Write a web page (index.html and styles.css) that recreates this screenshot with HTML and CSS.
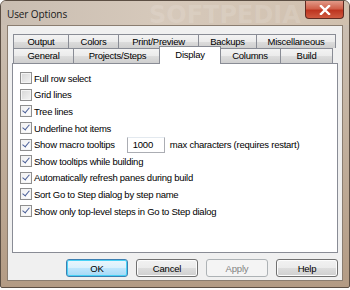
FILE: index.html
```html
<!DOCTYPE html>
<html lang="en">
<head>
    <meta charset="UTF-8">
    <title>User Options</title>
    <link rel="stylesheet" href="styles.css">
</head>
<body>
    <div class="window">
        <div class="titlebar">
            <span class="title">User Options</span>
            <span class="watermark">SOFTPEDIA</span>
            <button class="close">
                <svg width="12" height="10" viewBox="0 0 12 10">
                    <path d="M2 1 L10 9 M10 1 L2 9" stroke="#fff" stroke-width="2.4" stroke-linecap="square"/>
                </svg>
            </button>
        </div>
        <div class="client">
            <div class="tabs">
                <div class="tab-row">
                    <div class="tab t-output">Output</div>
                    <div class="tab t-colors">Colors</div>
                    <div class="tab t-print">Print/Preview</div>
                    <div class="tab t-backups">Backups</div>
                    <div class="tab t-misc">Miscellaneous</div>
                </div>
                <div class="tab-row">
                    <div class="tab t-general">General</div>
                    <div class="tab t-projects">Projects/Steps</div>
                    <div class="tab t-display active">Display</div>
                    <div class="tab t-columns">Columns</div>
                    <div class="tab t-build">Build</div>
                </div>
            </div>
            <div class="panel">
                <label class="option"><span class="check"></span>Full row select</label>
                <label class="option"><span class="check"></span>Grid lines</label>
                <label class="option"><span class="check checked"></span>Tree lines</label>
                <label class="option"><span class="check checked"></span>Underline hot items</label>
                <label class="option">
                    <span class="check checked"></span>Show macro tooltips
                    <span class="field">1000</span>
                    <span class="after">max characters (requires restart)</span>
                </label>
                <label class="option"><span class="check checked"></span>Show tooltips while building</label>
                <label class="option"><span class="check checked"></span>Automatically refresh panes during build</label>
                <label class="option"><span class="check checked"></span>Sort Go to Step dialog by step name</label>
                <label class="option"><span class="check checked"></span>Show only top-level steps in Go to Step dialog</label>
            </div>
            <div class="buttons">
                <button class="btn default">OK</button>
                <button class="btn">Cancel</button>
                <button class="btn" disabled>Apply</button>
                <button class="btn">Help</button>
            </div>
        </div>
    </div>
</body>
</html>
```

FILE: styles.css
```css
body {
    margin: 0;
    padding: 0;
    background-color: #ffffff;
    font-family: "Liberation Sans", Arial, sans-serif;
    font-size: 9.5px;
    letter-spacing: -0.25px;
    color: #000;
}
.window {
    width: 348px;
    height: 286px;
    border: 1px solid #5c4f44;
    border-radius: 6px 6px 2px 2px;
    background: linear-gradient(to bottom, #cdc2b7 0%, #c4b3a1 40%, #b39b84 100%);
    display: flex;
    flex-direction: column;
    position: relative;
    overflow: hidden;
}
.titlebar {
    height: 24px;
    display: flex;
    align-items: flex-start;
    justify-content: space-between;
    background: linear-gradient(to right, #c9bdb1 0%, #d6c9bb 45%, #d0c0ae 100%);
}
.title {
    font-family: "Open Sans", "Liberation Sans", sans-serif;
    font-size: 10px;
    letter-spacing: -0.1px;
    color: #1a1a1a;
    margin: 6px 0 0 6px;
}
.watermark {
    position: absolute;
    left: 148px;
    top: 0;
    font-family: "DejaVu Sans", sans-serif;
    font-weight: bold;
    font-size: 24px;
    letter-spacing: 0;
    color: rgba(255, 255, 255, 0.13);
}
.close {
    width: 39px;
    height: 18px;
    margin: 0 5px 0 0;
    padding: 0;
    border: 1px solid #5e2a22;
    border-top: none;
    border-radius: 0 0 4px 4px;
    background: linear-gradient(to bottom, #e29a88 0%, #d0604a 45%, #bd3520 55%, #cf5a40 100%);
    display: flex;
    align-items: center;
    justify-content: center;
    position: relative;
    z-index: 1;
}
.client {
    margin: 0 6px;
    height: 256px;
    background-color: #f0f0f0;
    border: 1px solid #8a7d70;
    box-sizing: border-box;
    display: flex;
    flex-direction: column;
    padding: 8px 4px 0 4px;
}
.tabs {
    padding-left: 1px;
    display: flex;
    flex-direction: column;
}
.tab-row {
    display: flex;
    height: 14px;
}
.tab-row + .tab-row {
    height: 15px;
}
.tab {
    box-sizing: border-box;
    border: 1px solid #898c95;
    border-bottom: none;
    margin-left: -1px;
    background: linear-gradient(to bottom, #f3f3f3 0%, #ebebeb 50%, #dddddd 51%, #cfcfcf 100%);
    text-align: center;
    line-height: 14px;
    white-space: nowrap;
}
.tab:first-child {
    margin-left: 0;
}
.tab.active {
    background: #fff;
    height: 18px;
    margin: -2px -2px -1px -3px;
    position: relative;
    z-index: 1;
    line-height: 15px;
}
.tab.active + .tab {
    margin-left: 0;
}
.t-output { width: 56px; }
.t-colors { width: 51px; }
.t-print { width: 81px; }
.t-backups { width: 59px; }
.t-misc { width: 80px; }
.t-general { width: 61px; }
.t-projects { width: 89px; }
.t-display { width: 62px; }
.t-columns { width: 62px; }
.t-build { width: 53px; }
.panel {
    height: 190px;
    width: 326px;
    box-sizing: border-box;
    background-color: #fff;
    border: 1px solid #898c95;
    padding: 6px 0 0 7px;
    display: flex;
    flex-direction: column;
}
.option {
    height: 16.6px;
    display: flex;
    align-items: center;
    white-space: nowrap;
}
.check {
    width: 12px;
    height: 12px;
    box-sizing: border-box;
    border: 1px solid #8f8f8f;
    background: linear-gradient(135deg, #d6d6d6 0%, #f4f4f4 100%);
    box-shadow: inset 0 0 0 1px #f4f4f4;
    margin-right: 2px;
    position: relative;
}
.check.checked {
    background: linear-gradient(135deg, #f0f0f0 0%, #ffffff 100%);
}
.check.checked::after {
    content: "";
    position: absolute;
    left: 3px;
    top: 0;
    width: 3px;
    height: 6px;
    border: solid #4a5f98;
    border-width: 0 1.5px 1.5px 0;
    transform: rotate(40deg);
}
.field {
    width: 38px;
    height: 16px;
    box-sizing: border-box;
    border: 1px solid #abadb3;
    border-top-color: #e3e9ef;
    margin-left: 12px;
    padding-left: 5px;
    line-height: 14px;
}
.after {
    margin-left: 5px;
}
.buttons {
    display: flex;
    justify-content: flex-end;
    gap: 8px;
    margin-top: 6px;
    width: 326px;
}
.btn {
    width: 62px;
    height: 18px;
    padding: 0;
    font-family: "Liberation Sans", Arial, sans-serif;
    font-size: 9.5px;
    letter-spacing: -0.2px;
    color: #000;
    border: 1px solid #707070;
    border-radius: 3px;
    background: linear-gradient(to bottom, #f2f2f2 0%, #ebebeb 50%, #dddddd 51%, #cfcfcf 100%);
    box-shadow: inset 0 0 0 1px #fcfcfc;
}
.btn.default {
    border-color: #3c7fb1;
    box-shadow: inset 0 0 0 1px #48d2f6;
    background: linear-gradient(to bottom, #eaf6fd 0%, #d9f0fc 50%, #bee6fd 51%, #a7d9f5 100%);
}
.btn:disabled {
    border-color: #adb2b5;
    background: #f4f4f4;
    color: #838383;
    box-shadow: none;
}
```
